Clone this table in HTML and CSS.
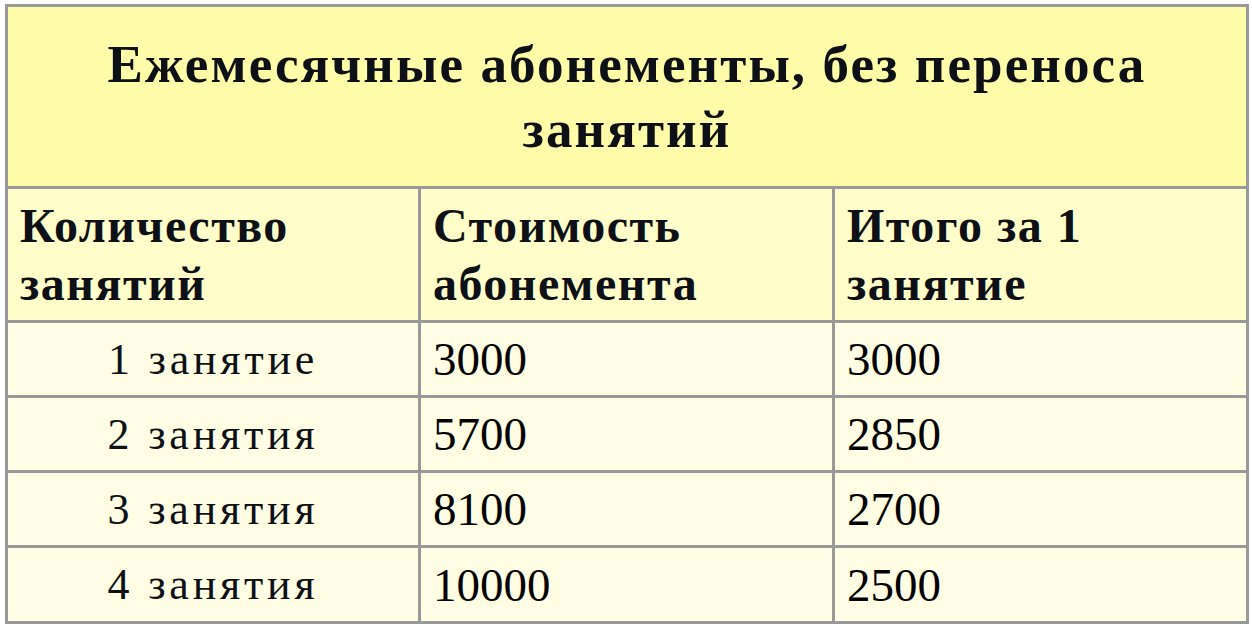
FILE: index.html
```html
<!DOCTYPE html>
<html lang="ru">
<head>
<meta charset="utf-8">
<link rel="stylesheet" href="styles.css">
</head>
<body>
<table class="prices">
  <colgroup>
    <col class="c1"><col class="c2"><col class="c3">
  </colgroup>
  <tr class="title-row">
    <td colspan="3" class="title">Ежемесячные абонементы, без переноса занятий</td>
  </tr>
  <tr class="head-row">
    <td class="head">Количество занятий</td>
    <td class="head">Стоимость абонемента</td>
    <td class="head last">Итого за 1 занятие</td>
  </tr>
  <tr class="row">
    <td class="name">1 занятие</td>
    <td class="num">3000</td>
    <td class="num last">3000</td>
  </tr>
  <tr class="row">
    <td class="name">2 занятия</td>
    <td class="num">5700</td>
    <td class="num last">2850</td>
  </tr>
  <tr class="row">
    <td class="name">3 занятия</td>
    <td class="num">8100</td>
    <td class="num last">2700</td>
  </tr>
  <tr class="row end">
    <td class="name">4 занятия</td>
    <td class="num">10000</td>
    <td class="num last">2500</td>
  </tr>
</table>
</body>
</html>
```

FILE: styles.css
```css
html, body {
  margin: 0;
  background: #ffffff;
}
body {
  padding: 4px 0 0 5px;
}
.prices {
  width: 1244px;
  table-layout: fixed;
  border-collapse: separate;
  border-spacing: 0;
  border: 3px solid #999999;
  font-family: "Liberation Serif", serif;
  color: #0d1117;
}
.c1 { width: 413px; }
.c2 { width: 414px; }
.c3 { width: 411px; }
.prices td {
  padding: 0 12px;
  border-right: 3px solid #999999;
  border-bottom: 3px solid #999999;
  vertical-align: middle;
}
.prices td.last,
.prices td.title { border-right: none; }
.row.end td { border-bottom: none; }

.title-row td { height: 179px; }
.head-row td { height: 131px; }
.row td { height: 72px; }
.row.end td { height: 73px; }

.title {
  background: #fffca9;
  text-align: center;
  font-weight: bold;
  font-size: 53px;
  line-height: 65px;
  letter-spacing: 2.1px;
}
.prices td.title { padding: 0 70px; }
.head {
  background: #fffdc9;
  font-weight: bold;
  font-size: 48px;
  line-height: 58px;
  letter-spacing: 1.5px;
}
.row td { background: #fffee5; }
.name {
  text-align: center;
  font-size: 44px;
  letter-spacing: 3.8px;
}
.num {
  font-size: 47px;
  color: #000000;
}
```
